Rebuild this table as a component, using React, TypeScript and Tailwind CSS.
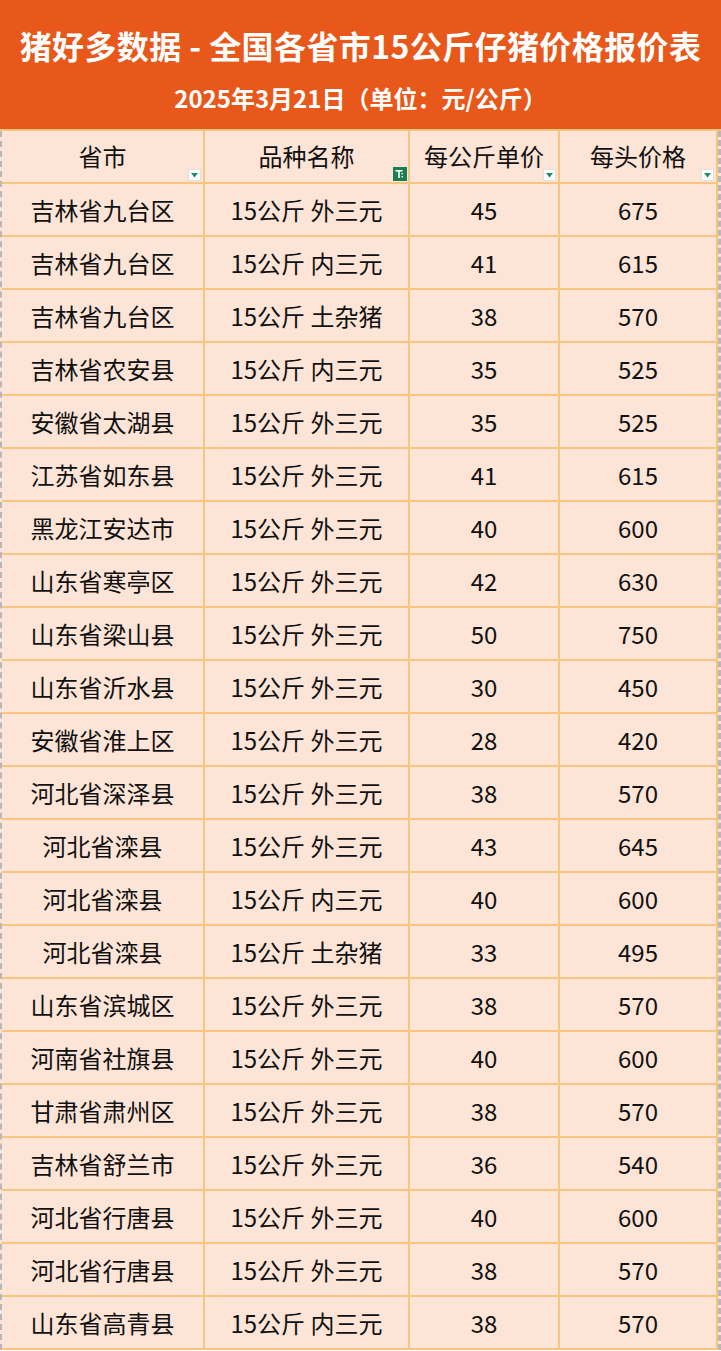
import React from "react";

const rows: [string, string, number, number][] = [
  ["吉林省九台区", "15公斤 外三元", 45, 675],
  ["吉林省九台区", "15公斤 内三元", 41, 615],
  ["吉林省九台区", "15公斤 土杂猪", 38, 570],
  ["吉林省农安县", "15公斤 内三元", 35, 525],
  ["安徽省太湖县", "15公斤 外三元", 35, 525],
  ["江苏省如东县", "15公斤 外三元", 41, 615],
  ["黑龙江安达市", "15公斤 外三元", 40, 600],
  ["山东省寒亭区", "15公斤 外三元", 42, 630],
  ["山东省梁山县", "15公斤 外三元", 50, 750],
  ["山东省沂水县", "15公斤 外三元", 30, 450],
  ["安徽省淮上区", "15公斤 外三元", 28, 420],
  ["河北省深泽县", "15公斤 外三元", 38, 570],
  ["河北省滦县", "15公斤 外三元", 43, 645],
  ["河北省滦县", "15公斤 内三元", 40, 600],
  ["河北省滦县", "15公斤 土杂猪", 33, 495],
  ["山东省滨城区", "15公斤 外三元", 38, 570],
  ["河南省社旗县", "15公斤 外三元", 40, 600],
  ["甘肃省肃州区", "15公斤 外三元", 38, 570],
  ["吉林省舒兰市", "15公斤 外三元", 36, 540],
  ["河北省行唐县", "15公斤 外三元", 40, 600],
  ["河北省行唐县", "15公斤 外三元", 38, 570],
  ["山东省高青县", "15公斤 内三元", 38, 570],
];

function DropIcon() {
  return (
    <div className="absolute right-[2px] bottom-[1px] w-[13px] h-[12px] bg-white border border-[#e0e0e0] flex items-center justify-center">
      <svg width="7" height="5" viewBox="0 0 7 5">
        <polygon points="0,0 7,0 3.5,4.5" fill="#1f8a63" />
      </svg>
    </div>
  );
}

function FilterIcon() {
  return (
    <div className="absolute right-[1px] bottom-[1px] w-[14px] h-[14px] bg-[#1d7d52] flex items-center justify-center">
      <svg width="10" height="10" viewBox="0 0 10 10">
        <rect x="0.5" y="1" width="7" height="1.6" fill="#ffffff" />
        <rect x="3.2" y="1" width="1.6" height="8" fill="#ffffff" />
        <rect x="6.5" y="4" width="1.4" height="1.4" fill="#ffffff" />
        <rect x="6.5" y="7" width="1.4" height="1.4" fill="#ffffff" />
      </svg>
    </div>
  );
}

const cell =
  "flex items-center justify-center border-b-2 border-r-2 border-[#f6c57f] text-[24px] text-[#111] leading-none";

export default function App() {
  return (
    <div className="w-[721px] h-[1351px] overflow-hidden bg-white font-['Noto_Sans_CJK_SC',sans-serif]">
      <div className="h-[129px] bg-[#e8581b] flex flex-col items-center">
        <div className="mt-[29px] text-white font-bold text-[32px] leading-none tracking-[0.4px]">
          猪好多数据 - 全国各省市15公斤仔猪价格报价表
        </div>
        <div className="mt-[25px] text-white font-bold text-[24px] leading-none">
          2025年3月21日（单位：元/公斤）
        </div>
      </div>
      <div className="border-t-2 border-[#f6c57f]">
        <div className="border-l-2 border-r-[3px] border-dashed border-l-[#b8b8b8] border-r-[#b8b8b8] bg-[#fce4d6]">
          <div className="grid grid-cols-[203px_205px_150px_158px]">
            <div className={cell + " h-[53px] relative pb-[2px]"}>
              省市
              <DropIcon />
            </div>
            <div className={cell + " h-[53px] relative pb-[2px]"}>
              品种名称
              <FilterIcon />
            </div>
            <div className={cell + " h-[53px] relative pb-[2px]"}>
              每公斤单价
              <DropIcon />
            </div>
            <div className={cell + " h-[53px] relative pb-[2px] border-r-0"}>
              每头价格
              <DropIcon />
            </div>
            {rows.map((r, i) => (
              <React.Fragment key={i}>
                <div className={cell + " h-[53px]"}>{r[0]}</div>
                <div className={cell + " h-[53px]"}>{r[1]}</div>
                <div className={cell + " h-[53px]"}>{r[2]}</div>
                <div className={cell + " h-[53px] border-r-0"}>{r[3]}</div>
              </React.Fragment>
            ))}
          </div>
        </div>
      </div>
    </div>
  );
}
